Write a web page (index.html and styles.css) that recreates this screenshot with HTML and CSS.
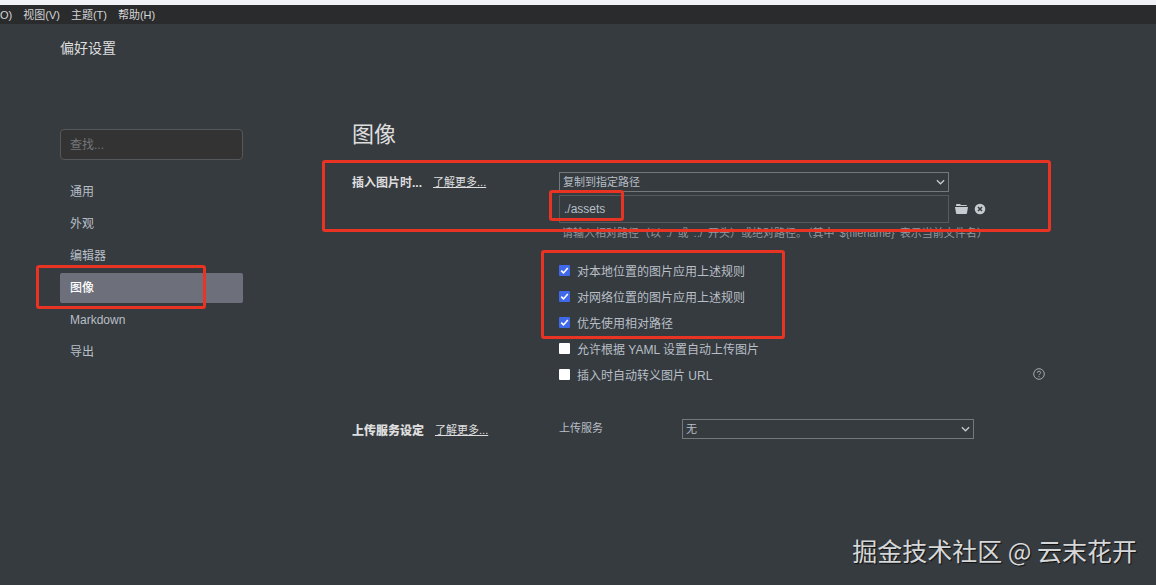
FILE: index.html
```
<!DOCTYPE html>
<html lang="zh-CN">
<head>
    <meta charset="UTF-8">
    <meta name="viewport" content="width=device-width, initial-scale=1.0">
    <title>偏好设置</title>
    <link rel="stylesheet" href="styles.css">
</head>
<body>
    <nav class="menubar">
        <button type="button">O)</button>
        <button type="button">视图(V)</button>
        <button type="button">主题(T)</button>
        <button type="button">帮助(H)</button>
    </nav>
    <header class="page-header">偏好设置</header>

    <div class="layout">
        <aside class="sidebar">
            <input class="search" type="text" placeholder="查找..." aria-label="查找">
            <nav class="sections">
                <a href="#general">通用</a>
                <a href="#appearance">外观</a>
                <a href="#editor">编辑器</a>
                <a href="#image" class="active">图像<span class="mark mark-nav"></span></a>
                <a href="#markdown">Markdown</a>
                <a href="#export">导出</a>
            </nav>
        </aside>

        <main class="content" id="image">
            <h1>图像</h1>

            <section class="setting insert">
                <div class="setting-title">
                    <label for="insert-action">插入图片时...</label>
                    <a href="#insert-help">了解更多...</a>
                </div>
                <div class="setting-body">
                    <div class="select-wrap wide">
                        <select id="insert-action">
                            <option>复制到指定路径</option>
                        </select>
                        <svg class="arrow" viewBox="0 0 10 6"><path d="M1 1l4 4 4-4"/></svg>
                    </div>
                    <div class="path-row">
                        <div class="path-field wide">
                            <input type="text" value="./assets" aria-label="路径">
                            <span class="mark mark-path"></span>
                        </div>
                        <button type="button" class="icon-btn" aria-label="选择文件夹">
                            <svg width="13" height="12" viewBox="0 0 13 12"><path d="M1 3V2q0-1 1-1h3l1 1h5q1 0 1 1z"/><path d="M0 4h13l-1 6q0 1-1 1H2q-1 0-1-1z"/></svg>
                        </button>
                        <button type="button" class="icon-btn" aria-label="清除">
                            <svg width="12" height="12" viewBox="0 0 12 12"><circle cx="6" cy="6" r="5.3"/><path class="cross" d="M4 4l4 4M8 4l-4 4"/></svg>
                        </button>
                    </div>
                    <p class="hint">请输入相对路径（以 './' 或 '../' 开头）或绝对路径。（其中 '${filename}' 表示当前文件名）</p>
                </div>
                <span class="mark mark-insert"></span>
            </section>

            <section class="setting">
                <div class="setting-body rules">
                    <label class="check"><input type="checkbox" checked>对本地位置的图片应用上述规则</label>
                    <label class="check"><input type="checkbox" checked>对网络位置的图片应用上述规则</label>
                    <label class="check"><input type="checkbox" checked>优先使用相对路径</label>
                    <label class="check"><input type="checkbox">允许根据 YAML 设置自动上传图片</label>
                    <div class="check-row">
                        <label class="check"><input type="checkbox">插入时自动转义图片 URL</label>
                        <button type="button" class="help" aria-label="帮助">
                            <svg width="12" height="12" viewBox="0 0 12 12"><circle cx="6" cy="6" r="5.3"/><path d="M4.3 4.8q0-1.6 1.7-1.6t1.7 1.5q0 .7-.9 1.2T6 7.1M6 8.2v1"/></svg>
                        </button>
                    </div>
                    <span class="mark mark-rules"></span>
                </div>
            </section>

            <section class="setting upload">
                <div class="setting-title">
                    <strong>上传服务设定</strong>
                    <a href="#upload-help">了解更多...</a>
                </div>
                <div class="setting-body service">
                    <label for="upload-service">上传服务</label>
                    <div class="select-wrap">
                        <select id="upload-service">
                            <option>无</option>
                        </select>
                        <svg class="arrow" viewBox="0 0 10 6"><path d="M1 1l4 4 4-4"/></svg>
                    </div>
                </div>
            </section>
        </main>
    </div>

    <div class="watermark">掘金技术社区 @ 云末花开</div>
</body>
</html>
```
FILE: styles.css
```
* {
    margin: 0;
    padding: 0;
    box-sizing: border-box;
}
body {
    min-height: 100vh;
    position: relative;
    border-top: 5px solid #f0f2f6;
    background: #363b40;
    color: #b8bfc6;
    font-family: "Liberation Sans", "Noto Sans CJK SC", sans-serif;
    font-size: 12px;
}
button, input, select {
    font: inherit;
    color: inherit;
    background: none;
    border: none;
}
.menubar {
    display: flex;
    gap: 11px;
    height: 19px;
    background: #2a2b2c;
}
.menubar button {
    padding-top: 1px;
    font-size: 11px;
    line-height: 19px;
    color: #d4d5d6;
}
.page-header {
    padding: 13px 60px 0;
    font-size: 14px;
    line-height: 22px;
    color: #dedede;
}
.layout {
    display: flex;
    gap: 109px;
    padding: 59px 105px 0 60px;
}
.sidebar {
    flex: 0 0 183px;
    padding-top: 11px;
}
.search {
    width: 100%;
    height: 31px;
    padding: 0 9px;
    border: 1px solid #55585a;
    border-radius: 4px;
    background: #333;
}
.search::placeholder {
    color: #737679;
}
.sections {
    display: flex;
    flex-direction: column;
    gap: 2px;
    margin-top: 17px;
}
.sections a {
    position: relative;
    padding: 0 10px;
    line-height: 30px;
    color: inherit;
    text-decoration: none;
    border-radius: 2px;
}
.sections a.active {
    background: #6d707b;
    color: #fff;
    font-weight: 500;
}
.content {
    flex: 1;
    min-width: 0;
}
h1 {
    font-size: 22px;
    font-weight: normal;
    line-height: 34px;
    color: #dedede;
}
.setting {
    display: flex;
    position: relative;
}
.setting-title {
    flex: 0 0 207px;
    display: flex;
    gap: 11px;
    align-items: center;
    height: 18px;
    color: #dedede;
    font-weight: bold;
    white-space: nowrap;
}
.setting-title a {
    font-size: 11px;
    font-weight: normal;
    color: inherit;
}
.setting-body {
    flex: 1;
    min-width: 0;
    position: relative;
}
.insert {
    margin-top: 20px;
}
.wide {
    width: 390px;
    max-width: 80%;
}
.select-wrap {
    position: relative;
    height: 20px;
}
select {
    appearance: none;
    display: block;
    width: 100%;
    height: 100%;
    padding: 0 20px 1px 3px;
    border: 1px solid #74797c;
    font-size: 11px;
}
.arrow {
    position: absolute;
    top: 7px;
    right: 4px;
    width: 9px;
    height: 6px;
    fill: none;
    stroke: #c8ccd0;
    stroke-width: 1.4;
    pointer-events: none;
}
.path-row {
    display: flex;
    align-items: center;
    gap: 6px;
    margin-top: 3px;
}
.path-field {
    position: relative;
    height: 28px;
}
.path-field input {
    width: 100%;
    height: 100%;
    padding: 0 4px;
    border: 1px solid #555a5e;
}
.icon-btn, .help {
    display: flex;
}
.icon-btn {
    fill: #c6cbd2;
}
.cross {
    stroke: #363b40;
    stroke-width: 1.5;
}
.hint {
    padding-left: 3px;
    font-size: 11px;
    line-height: 20px;
    color: #92989e;
    white-space: nowrap;
}
.rules {
    margin: 14px 0 0 207px;
}
.check {
    display: flex;
    align-items: center;
    gap: 7px;
    height: 26px;
}
.check input {
    appearance: none;
    width: 11px;
    height: 11px;
    border-radius: 1px;
    background: #fff;
}
.check input:checked {
    background: #3f68ea url("data:image/svg+xml,%3Csvg xmlns='http://www.w3.org/2000/svg' viewBox='0 0 11 11'%3E%3Cpath d='M2.2 5.6l2.3 2.3 4.3-5' fill='none' stroke='white' stroke-width='1.6'/%3E%3C/svg%3E");
}
.check-row {
    display: flex;
    justify-content: space-between;
    align-items: center;
    padding-right: 6px;
}
.help svg {
    fill: none;
    stroke: #a3a9af;
}
.upload {
    margin-top: 32px;
}
.upload .setting-title {
    height: 20px;
}
.service {
    display: flex;
    font-size: 11px;
}
.service label {
    flex: 0 0 123px;
    line-height: 18px;
}
.service .select-wrap {
    width: 292px;
}
/* red outlines drawn over the settings */
.mark {
    position: absolute;
    border: 3px solid #e93323;
    border-radius: 3px;
    pointer-events: none;
}
.mark-nav {
    top: -8px;
    left: -24px;
    width: 170px;
    height: 44px;
}
.mark-insert {
    top: -12px;
    left: -30px;
    right: 0;
    height: 72px;
}
.mark-path {
    top: -5px;
    left: -10px;
    width: 75px;
    height: 31px;
}
.mark-rules {
    top: -7px;
    left: -18px;
    width: 244px;
    height: 89px;
}
.watermark {
    position: absolute;
    right: 19px;
    bottom: 16px;
    font-family: "Noto Sans CJK SC", sans-serif;
    font-size: 25px;
    line-height: 38px;
    color: #d6d7d8;
    text-shadow: 1px 1px 1px #111;
}
```
